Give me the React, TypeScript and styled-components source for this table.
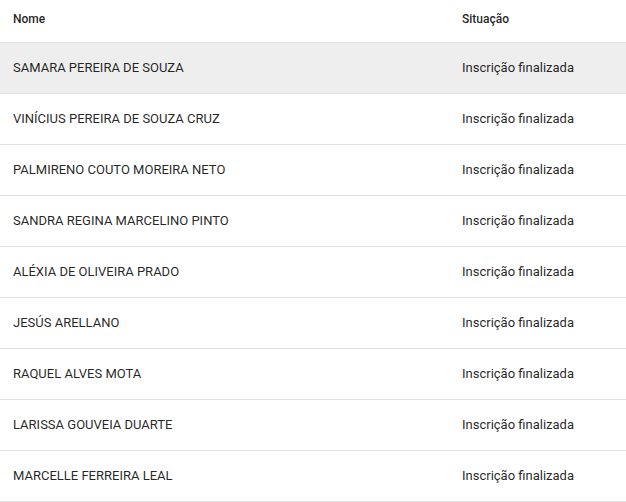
import React from "react";
import styled, { createGlobalStyle } from "styled-components";

const Global = createGlobalStyle`
  html, body { margin: 0; padding: 0; background: #ffffff; }
  body { font-family: Roboto, "Noto Sans", sans-serif; }
`;

const Table = styled.div`
  width: 626px;
  display: flex;
  flex-direction: column;
  background: #ffffff;
`;

const Row = styled.div<{ $header?: boolean; $hover?: boolean }>`
  display: grid;
  grid-template-columns: 449px 1fr;
  align-items: ${(p) => (p.$header ? "start" : "center")};
  padding: ${(p) => (p.$header ? "11px 13px 0" : "0 13px")};
  height: ${(p) => (p.$header ? "42px" : "50px")};
  box-sizing: content-box;
  border-bottom: 1px solid #e0e0e0;
  background: ${(p) => (p.$hover ? "#eeeeee" : "#ffffff")};
  ${(p) => (p.$header ? "height: 31px;" : "")}
`;

const HeadCell = styled.div`
  font-size: 12px;
  font-weight: 500;
  line-height: 16px;
  color: rgba(0, 0, 0, 0.87);
`;

const Cell = styled.div`
  font-size: 13px;
  font-weight: 400;
  line-height: 18px;
  color: rgba(0, 0, 0, 0.87);
  white-space: nowrap;
`;

const people = [
  "SAMARA PEREIRA DE SOUZA",
  "VINÍCIUS PEREIRA DE SOUZA CRUZ",
  "PALMIRENO COUTO MOREIRA NETO",
  "SANDRA REGINA MARCELINO PINTO",
  "ALÉXIA DE OLIVEIRA PRADO",
  "JESÚS ARELLANO",
  "RAQUEL ALVES MOTA",
  "LARISSA GOUVEIA DUARTE",
  "MARCELLE FERREIRA LEAL",
];

export default function App() {
  return (
    <>
      <Global />
      <Table>
        <Row $header>
          <HeadCell>Nome</HeadCell>
          <HeadCell>Situação</HeadCell>
        </Row>
        {people.map((name, i) => (
          <Row key={name} $hover={i === 0}>
            <Cell>{name}</Cell>
            <Cell>Inscrição finalizada</Cell>
          </Row>
        ))}
      </Table>
    </>
  );
}
